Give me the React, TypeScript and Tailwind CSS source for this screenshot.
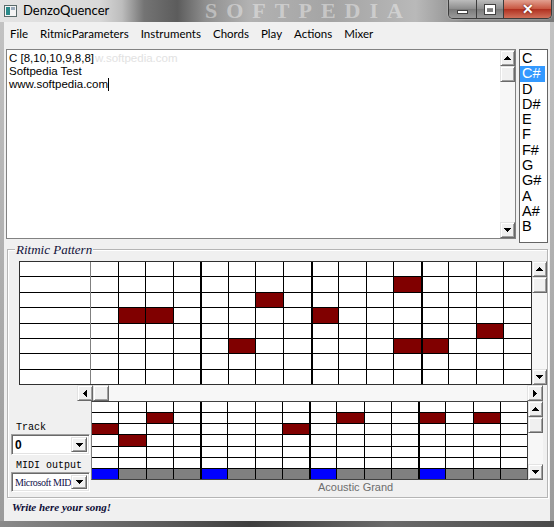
import React from "react";

type Dir = "up" | "down" | "left" | "right";

function Tri({ dir }: { dir: Dir }) {
  if (dir === "up")
    return (
      <svg width="7" height="4" viewBox="0 0 7 4" shapeRendering="crispEdges">
        <polygon points="3.5,0 7,4 0,4" fill="#000" />
      </svg>
    );
  if (dir === "down")
    return (
      <svg width="7" height="4" viewBox="0 0 7 4" shapeRendering="crispEdges">
        <polygon points="0,0 7,0 3.5,4" fill="#000" />
      </svg>
    );
  if (dir === "left")
    return (
      <svg width="4" height="7" viewBox="0 0 4 7" shapeRendering="crispEdges">
        <polygon points="4,0 4,7 0,3.5" fill="#000" />
      </svg>
    );
  return (
    <svg width="4" height="7" viewBox="0 0 4 7" shapeRendering="crispEdges">
      <polygon points="0,0 4,3.5 0,7" fill="#000" />
    </svg>
  );
}

const RAISED =
  "flex items-center justify-center bg-[#f0f0f0] border border-t-[#e3e3e3] border-l-[#e3e3e3] border-r-[#696969] border-b-[#696969] shadow-[inset_1px_1px_0_#fff,inset_-1px_-1px_0_#a0a0a0]";

function VScroll({ h }: { h: string }) {
  return (
    <div className={`w-[15px] ${h} flex flex-col bg-[#f7f7f7] shrink-0`}>
      <div className={`${RAISED} h-[16px]`}>
        <Tri dir="up" />
      </div>
      <div className={`${RAISED} h-[16px]`} />
      <div className="flex-1" />
      <div className={`${RAISED} h-[16px]`}>
        <Tri dir="down" />
      </div>
    </div>
  );
}

const TOP_RED = new Set(["1-11", "2-6", "3-1", "3-2", "3-8", "4-14", "5-5", "5-11", "5-12"]);
const BOT_RED = new Set(["1-2", "1-9", "1-12", "1-14", "2-0", "2-7", "3-1"]);
const BLUE = new Set([0, 4, 8, 12]);
const THICK = new Set([4, 8, 12]);

const NOTES = ["C", "C#", "D", "D#", "E", "F", "F#", "G", "G#", "A", "A#", "B"];
const MENU = ["File", "RitmicParameters", "Instruments", "Chords", "Play", "Actions", "Mixer"];

function Combo({ children }: { children: React.ReactNode }) {
  return (
    <div className="ml-[3px] w-[79px] flex items-stretch bg-white border border-t-[#a0a0a0] border-l-[#a0a0a0] border-r-white border-b-white shadow-[inset_1px_1px_0_#696969,inset_-1px_-1px_0_#e3e3e3] p-[2px]">
      <div className="flex-1 flex items-center overflow-hidden whitespace-nowrap pl-[1px]">{children}</div>
      <div className={`${RAISED} w-[16px]`}>
        <Tri dir="down" />
      </div>
    </div>
  );
}

export default function App() {
  const topRows = Array.from({ length: 8 }, (_, r) => r);
  const botRows = Array.from({ length: 7 }, (_, r) => r);
  const cols = Array.from({ length: 16 }, (_, c) => c);

  return (
    <div className="w-[554px] h-[527px] overflow-hidden flex flex-col bg-[linear-gradient(180deg,#c4c4c4,#9a9a9a)] font-['Liberation_Sans',Arial,sans-serif]">
      {/* Title bar */}
      <div className="h-[22px] shrink-0 relative flex items-start justify-between bg-[linear-gradient(90deg,#e4e4e4_0%,#d8d8d8_18%,#bdbdbd_22%,#747474_26%,#5c5c5c_32%,#8e8e8e_37%,#b2b2b2_45%,#a4a4a4_60%,#b9b9b9_75%,#8a8a8a_84%,#7a7a7a_100%)] overflow-hidden">
        <div className="absolute left-[205px] top-0 h-[22px] leading-[22px] text-[22px] font-bold tracking-[9px] text-white/40 font-['Liberation_Serif',serif] pointer-events-none whitespace-nowrap">
          SOFTPEDIA
        </div>
        <div className="relative flex items-center h-[22px] pl-[4px] gap-[6px]">
          <svg width="13" height="12" viewBox="0 0 13 12">
            <rect x="0.5" y="0.5" width="12" height="11" fill="#f4f4f4" stroke="#5a6a6a" />
            <rect x="2" y="2" width="4" height="8" fill="#2a8a8a" />
            <rect x="7" y="2" width="4" height="3" fill="#9ab" />
          </svg>
          <span className="text-[13px] font-['Lato',sans-serif] text-black">DenzoQuencer</span>
        </div>
        <div className="relative flex mr-[2px] h-[19px] rounded-b-[5px] overflow-hidden border border-t-0 border-[#3c3c3c] shadow-[0_0_2px_rgba(255,255,255,0.6)]">
          <div className="w-[28px] flex items-center justify-center bg-[linear-gradient(180deg,#bcbcbc,#8c8c8c_50%,#7a7a7a_51%,#9a9a9a)] border-r border-[#3c3c3c]">
            <div className="w-[11px] h-[4px] bg-white border border-[#404040] mt-[5px]" />
          </div>
          <div className="w-[27px] flex items-center justify-center bg-[linear-gradient(180deg,#bcbcbc,#8c8c8c_50%,#7a7a7a_51%,#9a9a9a)] border-r border-[#3c3c3c]">
            <div className="w-[10px] h-[9px] border-2 border-t-[3px] border-white outline outline-1 outline-[#404040]" />
          </div>
          <div className="w-[47px] flex items-center justify-center bg-[linear-gradient(180deg,#e2a090,#c8553f_50%,#b03020_51%,#d0705a)]">
            <span className="text-white font-bold text-[14px] leading-none [text-shadow:0_0_2px_#400]">✕</span>
          </div>
        </div>
      </div>

      {/* Client area */}
      <div className="mx-[4px] h-[499px] shrink-0 bg-[#f0f0f0] flex flex-col">
        {/* Menu */}
        <div className="h-[23px] flex items-center pl-[6px] gap-[12px] text-[11.5px] font-['Lato',sans-serif] text-black">
          {MENU.map((m) => (
            <span key={m}>{m}</span>
          ))}
        </div>

        {/* Text area + list */}
        <div className="mt-[4px] flex items-start pl-[2px] gap-[3px]">
          <div className="w-[510px] h-[190px] flex bg-white border border-[#828282]">
            <div className="flex-1 pl-[2px] pt-[2px] text-[11.5px] leading-[13px] text-black">
              <div className="whitespace-nowrap">
                C [8,10,10,9,8,8]<span className="text-[#e2e2e2] ml-[1px]">w.softpedia.com</span>
              </div>
              <div>Softpedia Test</div>
              <div className="flex items-center">
                www.softpedia.com<span className="inline-block w-px h-[13px] bg-black" />
              </div>
            </div>
            <VScroll h="h-[188px]" />
          </div>
          <div className="w-[29px] h-[194px] bg-white border border-[#646464] pt-[1px] text-[14.5px] leading-[15.3px] text-black">
            {NOTES.map((n) => (
              <div
                key={n}
                className={n === "C#" ? "bg-[#3399ff] text-white pl-[2px] mr-[2px]" : "pl-[2px]"}
              >
                {n}
              </div>
            ))}
          </div>
        </div>

        {/* Group box */}
        <div className="relative mt-[6px] ml-[3px] w-[541px] border border-[#b5b5b5] shadow-[inset_1px_1px_0_#fff,1px_1px_0_#fff] pt-[11px] pb-[3px]">
          <div className="absolute -top-[8px] left-[7px] px-[1px] bg-[#f0f0f0] text-[13px] leading-[15px] italic font-['Liberation_Serif',serif] text-[#10103a]">
            Ritmic Pattern
          </div>

          {/* Top grid row */}
          <div className="flex ml-[11px] h-[124px]">
            <div className="flex-1 flex border border-[#303030]">
              <div className="w-[71px] grid grid-rows-[repeat(8,minmax(0,1fr))] gap-px bg-black border-r border-[#808080]">
                {topRows.map((r) => (
                  <div key={r} className="bg-white" />
                ))}
              </div>
              <div className="flex-1 grid grid-cols-[repeat(16,minmax(0,1fr))] grid-rows-[repeat(8,minmax(0,1fr))] gap-px bg-black">
                {topRows.map((r) =>
                  cols.map((c) => (
                    <div
                      key={`${r}-${c}`}
                      className={`${TOP_RED.has(`${r}-${c}`) ? "bg-[#800000]" : "bg-white"} ${THICK.has(c) ? "border-l border-black" : ""}`}
                    />
                  ))
                )}
              </div>
            </div>
            <VScroll h="h-[124px]" />
          </div>

          {/* Horizontal scroll */}
          <div className="ml-[69px] w-[466px] h-[16px] flex bg-[#f7f7f7]">
            <div className={`${RAISED} w-[16px]`}>
              <Tri dir="left" />
            </div>
            <div className={`${RAISED} w-[16px]`} />
            <div className="flex-1" />
            <div className={`${RAISED} w-[16px]`}>
              <Tri dir="right" />
            </div>
          </div>

          {/* Bottom section */}
          <div className="flex">
            <div className="w-[83px] flex flex-col">
              <div className="mt-[20px] ml-[8px] h-[13px] leading-[13px] text-[10px] font-['Liberation_Mono',monospace] text-black">
                Track
              </div>
              <div className="h-[21px] flex">
                <Combo>
                  <span className="font-bold text-[12px] font-['Liberation_Sans',sans-serif]">0</span>
                </Combo>
              </div>
              <div className="mt-[4px] ml-[8px] h-[13px] leading-[13px] text-[10px] font-['Liberation_Mono',monospace] text-black whitespace-pre">
                MIDI output
              </div>
              <div className="h-[20px] flex">
                <Combo>
                  <span className="text-[10px] font-['Liberation_Serif',serif] text-[#10104a] tracking-[-0.4px]">
                    Microsoft MIDI
                  </span>
                </Combo>
              </div>
            </div>
            <div className="flex flex-col">
              <div className="flex h-[79px]">
                <div className="w-[437px] grid grid-cols-[repeat(16,minmax(0,1fr))] grid-rows-[repeat(7,minmax(0,1fr))] gap-px bg-black border border-[#404040] border-l-[#808080]">
                  {botRows.map((r) =>
                    cols.map((c) => {
                      let bg = BOT_RED.has(`${r}-${c}`) ? "bg-[#800000]" : "bg-white";
                      if (r === 6) bg = BLUE.has(c) ? "bg-[#0000ff]" : "bg-[#808080]";
                      return (
                        <div
                          key={`${r}-${c}`}
                          className={`${bg} ${THICK.has(c) ? "border-l border-black" : ""}`}
                        />
                      );
                    })
                  )}
                </div>
                <VScroll h="h-[79px]" />
              </div>
              <div className="ml-[227px] mt-[1px] text-[11px] leading-[13px] text-[#6d6d6d] whitespace-nowrap">
                Acoustic Grand
              </div>
            </div>
          </div>
        </div>

        {/* Footer text */}
        <div className="mt-[2px] ml-[8px] text-[11px] leading-[15px] italic font-bold font-['Liberation_Serif',serif] text-[#0c0c36]">
          Write here your song!
        </div>
      </div>

      {/* bottom frame */}
      <div className="flex-1 bg-[linear-gradient(90deg,#8a8a8a,#5a5a5a_30%,#3e3e3e_45%,#6a6a6a_70%,#4a4a4a)]" />
    </div>
  );
}
